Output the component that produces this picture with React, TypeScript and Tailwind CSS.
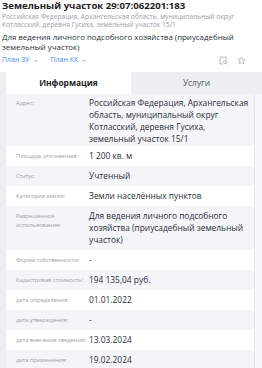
import React from "react";

const rows: { label: React.ReactNode; value: React.ReactNode; gray: boolean }[] = [
  { label: "Площадь уточненная:", value: "1 200 кв. м", gray: false },
  { label: "Статус:", value: "Учтенный", gray: true },
  { label: "Категория земли:", value: "Земли населённых пунктов", gray: false },
  {
    label: (
      <>
        Разрешенное
        <br />
        использование:
      </>
    ),
    value: "Для ведения личного подсобного хозяйства (приусадебный земельный участок)",
    gray: true,
  },
  { label: "Форма собственности:", value: "-", gray: false },
  { label: "Кадастровая стоимость:", value: "194 135,04 руб.", gray: true },
  { label: "дата определения:", value: "01.01.2022", gray: false },
  { label: "дата утверждения:", value: "-", gray: true },
  { label: "дата внесения сведений:", value: "13.03.2024", gray: false },
  { label: "дата применения:", value: "19.02.2024", gray: true },
];

function Row({
  label,
  value,
  gray,
  pad = "py-[4px]",
}: {
  label: React.ReactNode;
  value: React.ReactNode;
  gray: boolean;
  pad?: string;
}) {
  return (
    <div className={`flex items-start ${pad} ${gray ? "bg-[#f4f5f7]" : "bg-white"}`}>
      <div className="w-[83px] shrink-0 whitespace-nowrap pl-[10px] pt-[2px] text-[5.8px] leading-[9px] tracking-[-0.03px] text-[#9a9ea5]">
        {label}
      </div>
      <div className="flex-1 pr-[4px] text-[8.4px] leading-[12px] text-[#2b2f36]">{value}</div>
    </div>
  );
}

export default function App() {
  return (
    <div
      className="w-[262px] h-[368px] overflow-hidden bg-white"
      style={{ fontFamily: '"Open Sans", "Noto Sans", sans-serif' }}
    >
      <div className="px-[2px]">
        <div className="text-[9.6px] leading-[12px] font-bold text-[#222]">
          Земельный участок 29:07:062201:183
        </div>
        <div className="mt-[1px] text-[6.7px] leading-[8px] text-[#9a9ea5]">
          Российская Федерация, Архангельская область, муниципальный округ Котласский, деревня Гусиха, земельный участок 15/1
        </div>
        <div className="mt-[4px] text-[7.9px] leading-[9.5px] text-[#2b2f36]">
          Для ведения личного подсобного хозяйства (приусадебный земельный участок)
        </div>
        <div className="mt-[3px] flex h-[11px] items-center">
          <span className="text-[7px] text-[#3d8fe0]">План ЗУ →</span>
          <span className="ml-[12px] text-[7px] text-[#3d8fe0]">План КК →</span>
          <div className="ml-auto mr-[14px] flex items-center gap-[9px] text-[#a0a4aa]">
            <svg width="9" height="9" viewBox="0 0 12 12" fill="none" stroke="currentColor" strokeWidth="1">
              <path d="M5 10.5H1.5V1.5h8V5" />
              <circle cx="8" cy="8" r="2" />
              <path d="M9.5 9.5l1.8 1.8" />
            </svg>
            <svg width="9" height="9" viewBox="0 0 24 24" fill="none" stroke="currentColor" strokeWidth="1.8" strokeLinejoin="round">
              <path d="M12 2.5l2.9 6.1 6.6.8-4.9 4.6 1.3 6.6L12 17.3l-5.9 3.3 1.3-6.6-4.9-4.6 6.6-.8z" />
            </svg>
          </div>
        </div>
      </div>
      <div className="mt-[6px] flex">
        <div className="w-[6px] shrink-0 bg-[#eceef1]" />
        <div className="flex-1">
          <div className="flex h-[22px]">
            <div className="flex w-[125px] items-center justify-center bg-white text-[8.4px] font-bold text-[#222]">
              Информация
            </div>
            <div className="flex flex-1 items-center justify-center bg-[#eceef1] text-[8.4px] text-[#555a61]">
              Услуги
            </div>
          </div>
          <div className="flex">
            <div className="w-[248px] shrink-0">
              <Row
                label="Адрес:"
                value="Российская Федерация, Архангельская область, муниципальный округ Котласский, деревня Гусиха, земельный участок 15/1"
                gray={true}
                pad="pt-[3px] pb-[1px]"
              />
              {rows.map((r, i) => (
                <Row key={i} label={r.label} value={r.value} gray={r.gray} />
              ))}
            </div>
            <div className="flex-1 border-l border-[#e6e8eb] bg-[#f6f7f9]" />
          </div>
        </div>
      </div>
    </div>
  );
}
